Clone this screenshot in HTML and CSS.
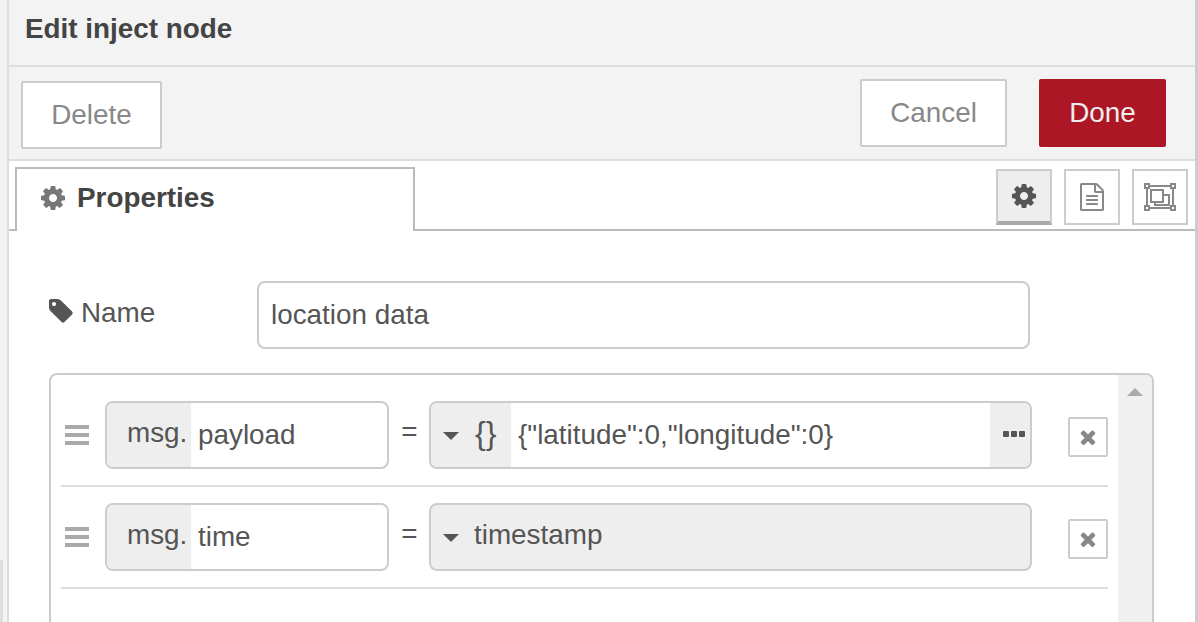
FILE: index.html
```html
<!DOCTYPE html>
<html lang="en">
<head>
<meta charset="utf-8">
<title>Edit inject node</title>
<link rel="stylesheet" href="styles.css">
</head>
<body>
<div class="strip"><span class="strip-mark"></span></div>
<main class="tray">
  <header class="title">Edit inject node</header>
  <div class="toolbar">
    <button class="btn btn-delete">Delete</button>
    <div class="toolbar-right">
      <button class="btn btn-cancel">Cancel</button>
      <button class="btn btn-done">Done</button>
    </div>
  </div>
  <div class="tabs">
    <div class="tab">
      <svg class="tab-gear" viewBox="0 0 1792 1792"><use href="#gear"/></svg>
      <span>Properties</span>
    </div>
    <div class="tab-icons">
      <button class="tab-icon is-active"><svg class="ic-gear" viewBox="0 0 1792 1792"><use href="#gear"/></svg></button>
      <button class="tab-icon">
        <svg class="ic-doc" viewBox="0 0 1792 1792"><path fill="#888" d="M1596 380q28 28 48 76t20 88v1152q0 40-28 68t-68 28h-1344q-40 0-68-28t-28-68v-1600q0-40 28-68t68-28h896q40 0 88 20t76 48zm-444-244v376h376q-10-29-22-41l-313-313q-12-12-41-22zm384 1528v-1024h-416q-40 0-68-28t-28-68v-416h-768v1536h1280zm-1024-864q0-14 9-23t23-9h704q14 0 23 9t9 23v64q0 14-9 23t-23 9h-704q-14 0-23-9t-9-23v-64zm736 224q14 0 23 9t9 23v64q0 14-9 23t-23 9h-704q-14 0-23-9t-9-23v-64q0-14 9-23t23-9h704zm0 256q14 0 23 9t9 23v64q0 14-9 23t-23 9h-704q-14 0-23-9t-9-23v-64q0-14 9-23t23-9h704z"/></svg>
      </button>
      <button class="tab-icon">
        <svg class="ic-frame" viewBox="0 0 32 28" fill="none" stroke="#888" stroke-width="2">
          <path d="M3 3h26v22H3z"/>
          <path d="M7 7h12v12H7z"/>
          <path d="M19 12h6v10H11v-3"/>
          <g fill="#fff"><rect x="1" y="1" width="4" height="4"/><rect x="27" y="1" width="4" height="4"/><rect x="1" y="23" width="4" height="4"/><rect x="27" y="23" width="4" height="4"/></g>
        </svg>
      </button>
    </div>
  </div>
  <section class="form">
    <div class="name-row">
      <label class="name-label">
        <svg class="ic-tag" viewBox="0 0 1792 1792"><path fill="#555" d="M576 448q0-53-37.500-90.500t-90.500-37.500-90.500 37.500-37.500 90.500 37.500 90.500 90.500 37.500 90.500-37.500 37.500-90.500zm1067 576q0 53-37 90l-491 492q-39 37-91 37-53 0-90-37l-715-716q-38-37-64.500-101t-26.500-117v-416q0-52 38-90t90-38h416q53 0 117 26.500t102 64.500l715 714q37 39 37 91z"/></svg>
        Name
      </label>
      <div class="input name-input">location data</div>
    </div>
    <div class="list">
      <div class="list-body">
        <div class="row">
          <div class="handle"><i></i><i></i><i></i></div>
          <div class="input prop"><span class="prefix">msg.</span><span class="prop-val">payload</span></div>
          <span class="eq">=</span>
          <div class="input typed">
            <span class="type-sel"><i class="caret"></i><span class="braces">{}</span></span>
            <span class="typed-val">{"latitude":0,"longitude":0}</span>
            <span class="more"><i></i><i></i><i></i></span>
          </div>
          <button class="remove"><svg viewBox="0 0 1792 1792"><use href="#times"/></svg></button>
        </div>
        <div class="row">
          <div class="handle"><i></i><i></i><i></i></div>
          <div class="input prop"><span class="prefix">msg.</span><span class="prop-val">time</span></div>
          <span class="eq">=</span>
          <div class="input typed typed-full">
            <i class="caret"></i><span class="stamp">timestamp</span>
          </div>
          <button class="remove"><svg viewBox="0 0 1792 1792"><use href="#times"/></svg></button>
        </div>
      </div>
      <div class="scrollbar"><i class="scroll-up"></i></div>
    </div>
  </section>
</main>
<svg class="defs" width="0" height="0"><defs>
  <symbol id="gear" viewBox="0 0 1792 1792"><path d="M1152 896q0-106-75-181t-181-75-181 75-75 181 75 181 181 75 181-75 75-181zm512-109v222q0 12-8 23t-20 13l-185 28q-19 54-39 91 35 50 107 138 10 12 10 25t-9 23q-27 37-99 108t-94 71q-12 0-26-9l-138-108q-44 23-91 38-16 136-29 186-7 28-36 28h-222q-14 0-24.500-8.500t-11.500-21.500l-28-184q-49-16-90-37l-141 107q-10 9-25 9-14 0-25-11-126-114-165-168-7-10-7-23 0-12 8-23 15-21 51-66.500t54-70.500q-27-50-41-99l-183-27q-13-2-21-12.500t-8-23.500v-222q0-12 8-23t19-13l186-28q14-46 39-92-40-57-107-138-10-12-10-24 0-10 9-23 26-36 98.500-107.500t94.500-71.500q13 0 26 10l138 107q44-23 91-38 16-136 29-186 7-28 36-28h222q14 0 24.500 8.500t11.500 21.500l28 184q49 16 90 37l142-107q9-9 24-9 13 0 25 10 129 119 165 170 7 8 7 22 0 12-8 23-15 21-51 66.500t-54 70.500q26 50 41 98l183 28q13 2 21 12.500t8 23.500z"/></symbol>
  <symbol id="times" viewBox="0 0 1792 1792"><path fill="#888" d="M1490 1322q0 40-28 68l-136 136q-28 28-68 28t-68-28l-294-294-294 294q-28 28-68 28t-68-28l-136-136q-28-28-28-68t28-68l294-294-294-294q-28-28-28-68t28-68l136-136q28-28 68-28t68 28l294 294 294-294q28-28 68-28t68 28l136 136q28 28 28 68t-28 68l-294 294 294 294q28 28 28 68z"/></symbol>
</defs></svg>
</body>
</html>
```
FILE: styles.css
```css
* { box-sizing: border-box; }
html, body { margin: 0; height: 622px; overflow: hidden; }
body {
  display: flex;
  background: #fff;
  font-family: "Liberation Sans", Arial, sans-serif;
  color: #555;
}
.defs { position: absolute; }
.strip {
  width: 7px;
  flex: none;
  background: #f3f3f3;
  display: flex;
  align-items: flex-end;
}
.strip-mark { width: 3px; height: 62px; background: #ddd; }
.tray {
  width: 1191px;
  height: 622px;
  flex: none;
  border-left: 2px solid #ddd;
  border-right: 3px solid #ccc;
}
.title {
  height: 67px;
  padding: 12px 0 0 16px;
  background: #f3f3f3;
  border-bottom: 2px solid #ddd;
  font-size: 27.850px;
  line-height: 34px;
  font-weight: bold;
  color: #444;
}
.toolbar {
  height: 94px;
  padding: 12px 29px 0 12px;
  background: #f3f3f3;
  border-bottom: 2px solid #ddd;
  display: flex;
  justify-content: space-between;
}
.toolbar-right { display: flex; gap: 32px; }
.btn {
  font: 27.850px "Liberation Sans", Arial, sans-serif;
  border: 2px solid #ccc;
  border-radius: 2px;
  background: #fff;
  color: #888;
  padding: 0;
}
.btn-delete { width: 141px; height: 68px; margin-top: 2px; }
.btn-cancel { width: 147px; height: 68px; }
.btn-done { width: 127px; height: 68px; border: 0; background: #ad1625; color: #eee; }
.tabs {
  height: 70px;
  padding: 6px 7px 0 6px;
  border-bottom: 2px solid #bbb;
  display: flex;
  justify-content: space-between;
}
.tab {
  width: 400px;
  height: 64px;
  background: #fff;
  border: 2px solid #bbb;
  border-bottom: 0;
  padding-left: 22px;
  display: flex;
  align-items: center;
  gap: 10px;
  font-size: 27.850px;
  font-weight: bold;
  color: #444;
  padding-bottom: 4px;
}
.tab-gear { width: 28px; height: 28px; fill: #777; }
.tab-icons { display: flex; gap: 12px; margin-top: 2px; }
.tab-icon {
  width: 56px;
  height: 56px;
  padding: 0;
  background: #fff;
  border: 2px solid #ccc;
  display: flex;
  align-items: center;
  justify-content: center;
}
.tab-icon.is-active { background: #eee; border-bottom: 4px solid #aaa; }
.ic-gear { width: 28px; height: 28px; fill: #555; }
.ic-doc { width: 28px; height: 28px; }
.ic-frame { width: 32px; height: 28px; }
.form { padding: 50px 0 0 40px; }
.name-row { display: flex; height: 68px; }
.name-label {
  width: 208px;
  display: flex;
  align-items: center;
  gap: 6px;
  font-size: 27.850px;
  padding-bottom: 5px;
}
.ic-tag { width: 28px; height: 28px; margin: -4px 0 0 -2px; flex: none; }
.input {
  border: 2px solid #ccc;
  border-radius: 8px;
  font-size: 27.850px;
  color: #555;
}
.name-input {
  width: 773px;
  height: 68px;
  padding-left: 12px;
  display: flex;
  align-items: center;
}
.list {
  margin-top: 24px;
  width: 1105px;
  height: 249px;
  border: 2px solid #ccc;
  border-bottom: 0;
  border-radius: 8px 8px 0 0;
  display: flex;
  overflow: hidden;
}
.list-body { width: 1067px; flex: none; padding: 10px 10px 0; }
.scrollbar { flex: 1; background: #f0f0f0; display: flex; justify-content: center; padding-top: 13px; }
.scroll-up {
  width: 0; height: 0;
  border-left: 8px solid transparent;
  border-right: 8px solid transparent;
  border-bottom: 8px solid #aaa;
}
.row {
  height: 102px;
  padding-top: 16px;
  border-bottom: 2px solid #ddd;
  display: flex;
  align-items: flex-start;
}
.handle {
  width: 24px;
  margin: 24px 16px 0 4px;
  display: flex;
  flex-direction: column;
  gap: 4px;
}
.handle i { height: 4px; background: #aaa; display: block; }
.prop { width: 284px; height: 68px; display: flex; overflow: hidden; }
.prefix {
  width: 84px;
  background: #eee;
  padding-left: 20px;
  line-height: 60px;
  flex: none;
}
.prop-val { padding-left: 7px; line-height: 64px; }
.eq { width: 40px; padding-left: 1px; text-align: center; font-size: 27.850px; line-height: 62px; }
.typed { width: 603px; height: 68px; display: flex; overflow: hidden; align-items: center; }
.type-sel {
  width: 80px;
  height: 100%;
  background: #eee;
  display: flex;
  align-items: center;
  flex: none;
}
.caret {
  width: 0; height: 0;
  margin: 2px 0 0 12px;
  flex: none;
  border-left: 8px solid transparent;
  border-right: 8px solid transparent;
  border-top: 8px solid #555;
}
.braces { margin: -4px 0 0 16px; font-size: 32px; }
.typed-val { flex: 1; padding-left: 7px; font-size: 27.850px; white-space: nowrap; }
.more {
  width: 40px;
  height: 100%;
  background: #eee;
  display: flex;
  align-items: center;
  justify-content: center;
  gap: 2px;
  padding: 0 0 2px 7px;
}
.more i { width: 6px; height: 6px; background: #555; border-radius: 1px; }
.typed-full { background: #eee; padding-bottom: 4px; }
.typed-full .caret { margin-top: 6px; }
.stamp { margin-left: 15px; }
.remove {
  width: 40px;
  height: 40px;
  margin: 16px 0 0 36px;
  padding: 7px;
  background: #fff;
  border: 2px solid #ccc;
  border-radius: 2px;
  display: flex;
  flex: none;
}
.remove svg { width: 22px; height: 22px; }
```
